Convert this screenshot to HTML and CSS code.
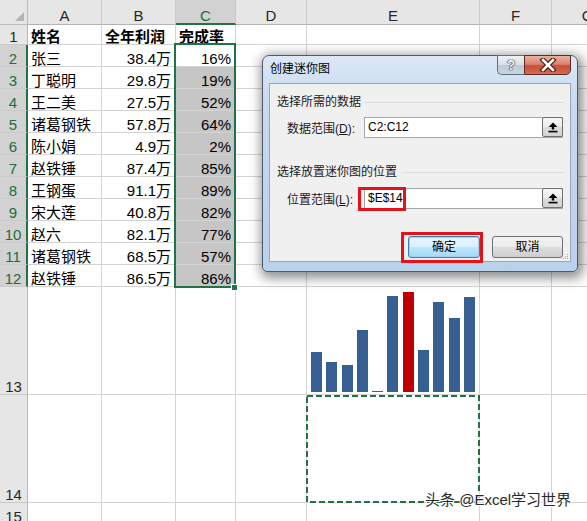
FILE: index.html
```html
<!DOCTYPE html>
<html lang="zh-CN">
<head>
<meta charset="utf-8">
<title>创建迷你图</title>
<link rel="stylesheet" href="styles.css">
</head>
<body>
<div class="sheet">
  <div class="grid">
    <div class="corner"><svg class="tri" width="27" height="24" viewBox="0 0 27 24"><polygon points="15,21 24,21 24,12" fill="#b4b4b4"/></svg></div>
    <div class="hc">A</div><div class="hc">B</div><div class="hc on">C</div><div class="hc">D</div><div class="hc">E</div><div class="hc">F</div><div class="hc">G</div>

    <div class="hr">1</div><div class="c b">姓名</div><div class="c b">全年利润</div><div class="c b">完成率</div><div class="c"></div><div class="c"></div><div class="c"></div><div class="c"></div>

    <div class="hr on">2</div><div class="c">张三</div><div class="c num">38.4万</div><div class="c num">16%</div><div class="c"></div><div class="c"></div><div class="c"></div><div class="c"></div>
    <div class="hr on">3</div><div class="c">丁聪明</div><div class="c num">29.8万</div><div class="c num g">19%</div><div class="c"></div><div class="c"></div><div class="c"></div><div class="c"></div>
    <div class="hr on">4</div><div class="c">王二美</div><div class="c num">27.5万</div><div class="c num g">52%</div><div class="c"></div><div class="c"></div><div class="c"></div><div class="c"></div>
    <div class="hr on">5</div><div class="c">诸葛钢铁</div><div class="c num">57.8万</div><div class="c num g">64%</div><div class="c"></div><div class="c"></div><div class="c"></div><div class="c"></div>
    <div class="hr on">6</div><div class="c">陈小娟</div><div class="c num">4.9万</div><div class="c num g">2%</div><div class="c"></div><div class="c"></div><div class="c"></div><div class="c"></div>
    <div class="hr on">7</div><div class="c">赵铁锤</div><div class="c num">87.4万</div><div class="c num g">85%</div><div class="c"></div><div class="c"></div><div class="c"></div><div class="c"></div>
    <div class="hr on">8</div><div class="c">王钢蛋</div><div class="c num">91.1万</div><div class="c num g">89%</div><div class="c"></div><div class="c"></div><div class="c"></div><div class="c"></div>
    <div class="hr on">9</div><div class="c">宋大莲</div><div class="c num">40.8万</div><div class="c num g">82%</div><div class="c"></div><div class="c"></div><div class="c"></div><div class="c"></div>
    <div class="hr on">10</div><div class="c">赵六</div><div class="c num">82.1万</div><div class="c num g">77%</div><div class="c"></div><div class="c"></div><div class="c"></div><div class="c"></div>
    <div class="hr on">11</div><div class="c">诸葛钢铁</div><div class="c num">68.5万</div><div class="c num g">57%</div><div class="c"></div><div class="c"></div><div class="c"></div><div class="c"></div>
    <div class="hr on">12</div><div class="c">赵铁锤</div><div class="c num">86.5万</div><div class="c num g">86%</div><div class="c"></div><div class="c"></div><div class="c"></div><div class="c"></div>

    <div class="hr">13</div><div class="c"></div><div class="c"></div><div class="c"></div><div class="c"></div>
    <div class="c spark">
      <span class="bar" style="height:40px"></span>
      <span class="bar" style="height:30px"></span>
      <span class="bar" style="height:27px"></span>
      <span class="bar" style="height:62px"></span>
      <span class="bar" style="height:1px"></span>
      <span class="bar" style="height:96px"></span>
      <span class="bar max" style="height:100px"></span>
      <span class="bar" style="height:42px"></span>
      <span class="bar" style="height:90px"></span>
      <span class="bar" style="height:74px"></span>
      <span class="bar" style="height:95px"></span>
    </div>
    <div class="c"></div><div class="c"></div>

    <div class="hr">14</div><div class="c"></div><div class="c"></div><div class="c"></div><div class="c"></div>
    <div class="c target"><svg class="ants" width="174" height="108" viewBox="0 0 174 108"><rect x="1" y="1" width="172" height="106" fill="none" stroke="#217346" stroke-width="2" stroke-dasharray="6 3"/></svg></div>
    <div class="c"></div><div class="c"></div>

    <div class="hr">15</div><div class="c"></div><div class="c"></div><div class="c"></div><div class="c"></div><div class="c"></div><div class="c"></div><div class="c"></div>
  </div>

  <div class="selection"><span class="handle"></span></div>

  <div class="dialog">
    <div class="titlebar">
      <span class="title">创建迷你图</span>
      <div class="winbtns">
        <span class="help">?</span>
        <span class="close"><svg width="20" height="14" viewBox="0 0 20 14"><path d="M5 2 L15 12 M15 2 L5 12" stroke="#4a2018" stroke-width="5" stroke-linecap="square"/><path d="M5 2 L15 12 M15 2 L5 12" stroke="#ffffff" stroke-width="2.6" stroke-linecap="square"/></svg></span>
      </div>
    </div>
    <div class="panel">
      <div class="group">选择所需的数据<span class="rule"></span></div>
      <div class="field first">
        <span class="flabel">数据范围(<u>D</u>):</span>
        <div class="input"><span class="val">C2:C12</span><span class="pick"><svg width="10" height="11" viewBox="0 0 10 11"><polygon points="5,0.5 9.5,5 6.2,5 6.2,7.5 3.8,7.5 3.8,5 0.5,5" fill="#000"/><rect x="0.5" y="8.8" width="9" height="1.6" fill="#000"/></svg></span></div>
      </div>
      <div class="group second">选择放置迷你图的位置<span class="rule"></span></div>
      <div class="field">
        <span class="flabel">位置范围(<u>L</u>):</span>
        <div class="input"><span class="val">$E$14</span><span class="pick"><svg width="10" height="11" viewBox="0 0 10 11"><polygon points="5,0.5 9.5,5 6.2,5 6.2,7.5 3.8,7.5 3.8,5 0.5,5" fill="#000"/><rect x="0.5" y="8.8" width="9" height="1.6" fill="#000"/></svg></span></div>
      </div>
      <div class="actions">
        <span class="btn default">确定</span>
        <span class="btn">取消</span>
      </div>
      <svg class="grip" width="7" height="7" viewBox="0 0 7 7"><rect x="5" y="1" width="1" height="1" fill="#a8a8a8"/><rect x="3" y="3" width="1" height="1" fill="#a8a8a8"/><rect x="5" y="3" width="1" height="1" fill="#a8a8a8"/><rect x="1" y="5" width="1" height="1" fill="#a8a8a8"/><rect x="3" y="5" width="1" height="1" fill="#a8a8a8"/><rect x="5" y="5" width="1" height="1" fill="#a8a8a8"/></svg>
    </div>
    <span class="mark mark-input"></span>
    <span class="mark mark-ok"></span>
  </div>

  <div class="watermark">头条 @Excel学习世界</div>
</div>
</body>
</html>
```

FILE: styles.css
```css
html, body {
  margin: 0;
  padding: 0;
  background: #ffffff;
}

.sheet {
  position: relative;
  width: 587px;
  height: 521px;
  overflow: hidden;
  font-family: "Liberation Sans", "Noto Sans CJK SC", sans-serif;
  font-size: 15px;
  color: #000;
}

.grid {
  display: grid;
  grid-template-columns: 28px 74px 74px 60px 71px 173px 72px 72px;
  grid-template-rows: 25px 20px repeat(11, 22px) 108px 108px 22px;
  width: 624px;
}

.grid > div {
  box-sizing: border-box;
  display: flex;
  align-items: flex-end;
  line-height: 14px;
  white-space: nowrap;
}

.corner {
  background: #e6e6e6;
  border-right: 1px solid #bdbdbd;
  border-bottom: 1px solid #bdbdbd;
}

.tri {
  display: block;
}

.hc {
  background: #e6e6e6;
  border-right: 1px solid #cacaca;
  border-bottom: 1px solid #b4b4b4;
  justify-content: center;
  color: #262626;
  padding-bottom: 1px;
}

.hc.on {
  background: #d2d2d2;
  color: #1e6b40;
  border-bottom: 2px solid #217346;
  padding-bottom: 0;
}

.hr {
  background: #e6e6e6;
  border-right: 1px solid #b4b4b4;
  border-bottom: 1px solid #cacaca;
  justify-content: center;
  color: #262626;
}

.hr.on {
  background: #d2d2d2;
  color: #1e6b40;
  border-right: 2px solid #217346;
}

.c {
  border-right: 1px solid #d4d4d4;
  border-bottom: 1px solid #d4d4d4;
  padding: 0 4px 0 3px;
}

.c.b {
  font-weight: bold;
}

.c.num {
  justify-content: flex-end;
}

.c.g {
  background: #c6c6c6;
}

.c.spark {
  justify-content: space-between;
  padding: 0 4px 2px 4px;
}

.bar {
  display: block;
  width: 11px;
  background: #366092;
}

.bar.max {
  background: #c00000;
}

.c.target {
  position: relative;
}

.ants {
  position: absolute;
  left: -1px;
  top: 0;
}

.selection {
  position: absolute;
  left: 174px;
  top: 43px;
  width: 62px;
  height: 245px;
  box-sizing: border-box;
  border: 2px solid #217346;
}

.handle {
  position: absolute;
  right: -4px;
  bottom: -5px;
  width: 5px;
  height: 5px;
  background: #217346;
  border: 1px solid #ffffff;
}

/* dialog */
.dialog {
  position: absolute;
  left: 262px;
  top: 55px;
  width: 316px;
  height: 217px;
  box-sizing: border-box;
  border: 1px solid #4e5a68;
  border-radius: 7px 7px 5px 5px;
  background: linear-gradient(180deg, #dce8f6 0%, #c9dbf0 20%, #c0d5ed 60%, #bad1ec 100%);
  box-shadow: 2px 3px 12px 3px rgba(0, 0, 0, 0.45);
  padding: 0 6px 9px 6px;
  display: flex;
  flex-direction: column;
  font-size: 12px;
  color: #000;
}

.titlebar {
  display: flex;
  height: 27px;
  flex: none;
}

.title {
  line-height: 27px;
  margin-left: 1px;
}

.winbtns {
  margin-left: auto;
  display: flex;
  height: 19px;
  margin-top: -1px;
}

.help {
  width: 27px;
  height: 20px;
  box-sizing: border-box;
  border: 1px solid #5f6e80;
  border-right: none;
  border-radius: 0 0 0 5px;
  background: linear-gradient(180deg, #eef2f7 0%, #d8e0ea 48%, #bdc9d7 52%, #c9d4e0 100%);
  color: #f6f6f6;
  font-weight: bold;
  font-size: 14px;
  line-height: 18px;
  text-align: center;
  text-shadow: 0 0 1px #222, 0 0 1px #222, 0 0 1px #222;
}

.close {
  width: 47px;
  height: 20px;
  box-sizing: border-box;
  border: 1px solid #5b2c24;
  border-radius: 0 0 5px 0;
  background: linear-gradient(180deg, #eab1a2 0%, #dc8270 45%, #c74e37 55%, #d56b53 100%);
  display: flex;
  align-items: center;
  justify-content: center;
}

.close svg {
  display: block;
}

.panel {
  position: relative;
  flex: 1;
  background: #f0f0f0;
  border: 1px solid #95a6b9;
  display: flex;
  flex-direction: column;
}

.group {
  display: flex;
  align-items: center;
  line-height: 14px;
  padding-left: 7px;
  margin-top: 11px;
  color: #1a1a1a;
}

.group.second {
  margin-top: 27px;
}

.rule {
  flex: 1;
  height: 1px;
  background: #d5dde5;
  margin: 0 6px 0 4px;
}

.field {
  display: flex;
  align-items: center;
  height: 21px;
  padding-left: 17px;
  margin-top: 9px;
}

.field.first {
  margin-top: 8px;
}

.flabel {
  width: 77px;
  color: #1a1a1a;
}

.input {
  width: 199px;
  height: 21px;
  box-sizing: border-box;
  border: 1px solid #a5a7ad;
  background: #ffffff;
  display: flex;
}

.val {
  flex: 1;
  padding-left: 3px;
  line-height: 19px;
}

.pick {
  width: 21px;
  height: 20px;
  margin: -1px -1px 0 0;
  box-sizing: border-box;
  border: 1px solid #707070;
  border-radius: 2px;
  background: linear-gradient(180deg, #f7f7f7 0%, #ececec 50%, #dcdcdc 51%, #d4d4d4 100%);
  display: flex;
  align-items: center;
  justify-content: center;
}

.pick svg {
  display: block;
}

.actions {
  display: flex;
  justify-content: flex-end;
  gap: 12px;
  padding-right: 7px;
  margin-top: 27px;
}

.btn {
  width: 71px;
  height: 22px;
  box-sizing: border-box;
  border: 1px solid #707070;
  border-radius: 3px;
  background: linear-gradient(180deg, #f3f3f3 0%, #ebebeb 50%, #dddddd 51%, #cfcfcf 100%);
  text-align: center;
  line-height: 20px;
}

.btn.default {
  width: 72px;
  border-color: #3c7fb1;
  box-shadow: inset 0 0 0 1px #9bd3f5;
  background: linear-gradient(180deg, #eaf6fd 0%, #d9f0fc 50%, #bee6fd 51%, #a7d9f5 100%);
}

.grip {
  position: absolute;
  right: 1px;
  bottom: 1px;
}

.mark {
  position: absolute;
  box-sizing: border-box;
  border: 3px solid #e3121b;
}

.mark-input {
  left: 95px;
  top: 131px;
  width: 48px;
  height: 24px;
}

.mark-ok {
  left: 138px;
  top: 176px;
  width: 82px;
  height: 31px;
}

.watermark {
  position: absolute;
  left: 425px;
  top: 491px;
  font-size: 15px;
  line-height: 18px;
  color: #2a2a2a;
  text-shadow: 0 0 2px #ffffff, 1px 1px 0 #ffffff, -1px -1px 0 #ffffff;
  white-space: nowrap;
}
```
